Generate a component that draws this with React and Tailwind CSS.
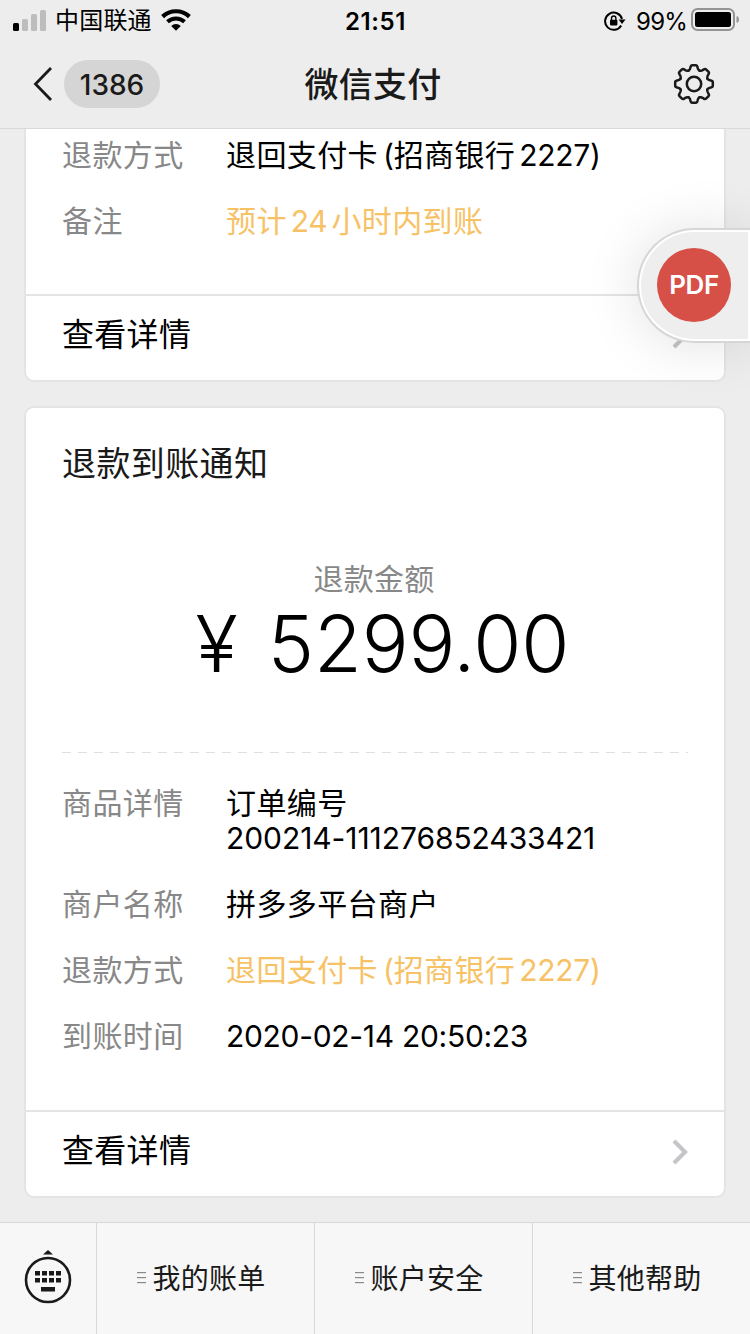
import React from 'react';
import { clsx } from 'clsx';

const refundRows = [
    { label: '退款方式', lines: [['退回支付卡', '(', '招商银行', '2227)']] },
    { label: '备注', lines: [['预计', '24', '小时内到账']], highlight: true },
];

const arrivalRows = [
    { label: '商品详情', lines: [['订单编号'], ['200214-111276852433421']] },
    { label: '商户名称', lines: [['拼多多平台商户']] },
    { label: '退款方式', lines: [['退回支付卡', '(', '招商银行', '2227)']], highlight: true },
    { label: '到账时间', lines: [['2020-02-14 20:50:23']] },
];

const menus = ['我的账单', '账户安全', '其他帮助'];

const getTracking = (text) => {
    if (text.length > 20) return '-tracking-[0.07px]';
    if (/^[\x20-\x7e]+$/.test(text)) return 'tracking-[-0.3px]';
    return 'tracking-[0.4px]';
};

const StatusBar = () => (
    <div className="flex h-10 items-center justify-between pl-[13px] pr-[11px] text-black">
        <div className="flex w-[300px] items-center">
            <svg width="33" height="21" viewBox="0 0 33 21">
                <rect x="0" y="13" width="6" height="8" rx="1.5" fill="#000" />
                <rect x="9" y="9" width="6" height="12" rx="1.5" fill="#bdbdbd" />
                <rect x="18" y="4" width="6" height="17" rx="1.5" fill="#bdbdbd" />
                <rect x="27" y="0" width="6" height="21" rx="1.5" fill="#bdbdbd" />
            </svg>
            <span className="ml-[9px] pt-[2px] text-[24px] leading-[40px] tracking-[0.2px]">中国联通</span>
            <svg className="ml-[9px]" width="30" height="22" viewBox="0 0 30 22">
                <path d="M1.6 7.6a19.5 19.5 0 0 1 26.8 0" fill="none" stroke="#000" strokeWidth="4.2" />
                <path d="M6.5 12.8a12.5 12.5 0 0 1 17 0" fill="none" stroke="#000" strokeWidth="4" />
                <path d="M10.2 17a6.8 6.8 0 0 1 9.6 0L15 21.8z" fill="#000" />
            </svg>
        </div>
        <span className="-ml-px pt-[3px] text-[24px] font-semibold leading-[40px] tracking-[0.6px]">21:51</span>
        <div className="flex w-[300px] items-center justify-end">
            <svg className="mt-px" width="22" height="20" viewBox="0 0 22 20">
                <path d="M17.2 14.4A8.6 8.6 0 1 1 18 8" fill="none" stroke="#000" strokeWidth="2" />
                <path d="M14.6 8.5h7L18 13z" fill="#000" />
                <rect x="6" y="8.8" width="7.4" height="5.6" rx="0.8" fill="#000" />
                <path d="M7.5 9V7.2a2.2 2.2 0 0 1 4.4 0V9" fill="none" stroke="#000" strokeWidth="1.4" />
            </svg>
            <span className="ml-[10px] pt-[3px] text-[24px] leading-[40px] tracking-[-0.8px]">99%</span>
            <svg className="ml-1" width="48" height="24" viewBox="0 0 48 24">
                <rect x="1" y="1" width="42" height="21" rx="5.5" fill="none" stroke="#949494" strokeWidth="2" />
                <rect x="4" y="4" width="36" height="15" rx="2.5" fill="#000" />
                <path d="M46 8.5c2 .8 2 5.2 0 6z" fill="#949494" stroke="#949494" />
            </svg>
        </div>
    </div>
);

const GearIcon = () => (
    <svg width="42" height="42" viewBox="-21 -21 42 42" fill="none" stroke="#1a1a1a" strokeWidth="2.5">
        {[0, 45, 90, 135, 180, 225, 270, 315].map((angle) => (
            <path
                key={angle}
                transform={`rotate(${angle})`}
                strokeLinecap="round"
                d="M-5.5 -13.3C-4.2 -13.9 -3.8 -14.9 -3.5 -16.8Q-3.1 -18.8 -1.8 -18.8H1.8Q3.1 -18.8 3.5 -16.8C3.8 -14.9 4.2 -13.9 5.5 -13.3"
            />
        ))}
        <circle r="7.2" />
    </svg>
);

const Header = () => (
    <header className="h-[129px] shrink-0 border-b border-[#d9d9d9] bg-[#ededed]">
        <StatusBar />
        <div className="flex h-[88px] items-center justify-between pl-8 pr-[35px]">
            <div className="flex w-[200px] items-center">
                <svg width="22" height="36" viewBox="0 0 22 36" fill="none" stroke="#1a1a1a" strokeWidth="2.8">
                    <path d="M19 2L3.5 18L19 34" />
                </svg>
                <span className="ml-[10px] h-12 w-24 rounded-full bg-[#d5d5d5] text-center text-[28px] leading-[51px] font-medium text-[#1a1a1a]">
                    1386
                </span>
            </div>
            <h1 className="-ml-1 pt-[2px] text-[34px] font-medium leading-[48px] tracking-[0.2px] text-[#1a1a1a]">微信支付</h1>
            <div className="flex w-[197px] justify-end">
                <GearIcon />
            </div>
        </div>
    </header>
);

const DetailRow = ({ label, lines, highlight }) => (
    <div className="flex text-[30px] leading-[35px]">
        <span className="w-[164px] shrink-0 tracking-[0.4px] text-[#888888]">{label}</span>
        <div className={clsx(highlight ? 'text-[#f7c266]' : 'text-black')}>
            {lines.map((parts) => (
                <div key={parts[0]} className="flex gap-1 whitespace-nowrap">
                    {parts.map((part) => (
                        <span key={part} className={clsx(getTracking(part), part === '(' && '-mr-1 ml-px')}>
                            {part}
                        </span>
                    ))}
                </div>
            ))}
        </div>
    </div>
);

const ViewDetails = () => (
    <div className="box-content flex h-[84px] items-center justify-between border-t-2 border-[#e4e4e4] pl-9 pr-[35px]">
        <span className="-mt-[7px] text-[32px] leading-[48px] tracking-[0.3px] text-black">查看详情</span>
        <svg className="-mt-1" width="18" height="26" viewBox="0 0 18 26" fill="none" stroke="#c5c5c9" strokeWidth="4.2">
            <path d="M3 2L14 13L3 24" />
        </svg>
    </div>
);

const FloatingPdf = () => (
    <div className="absolute right-0 top-[228px] flex h-[115px] w-[113px] items-center rounded-l-full border-2 border-r-0 border-[#d6d6d6] bg-white p-[2px] shadow-[0_2px_56px_rgba(0,0,0,0.12)]">
        <div className="flex h-full w-full items-center rounded-l-full bg-[#eeeeee] pl-4">
            <div className="-mt-px h-[74px] w-[74px] rounded-full bg-[#d65048] text-center text-[26px] font-semibold leading-[74px] tracking-[-0.4px] text-white">
                PDF
            </div>
        </div>
    </div>
);

const KeyboardIcon = () => (
    <svg className="-mt-[3px]" width="48" height="56" viewBox="0 0 48 56">
        <path d="M19 5.5L24 1L29 5.5z" fill="#1a1a1a" />
        <circle cx="24" cy="31" r="22" fill="none" stroke="#1a1a1a" strokeWidth="2.6" />
        {[11, 18, 25, 32].map((x) => (
            <g key={x} fill="#1a1a1a">
                <rect x={x} y="22" width="5" height="4.5" />
                <rect x={x} y="29" width="5" height="4.5" />
            </g>
        ))}
        <rect x="17" y="38" width="14" height="4.5" fill="#1a1a1a" />
    </svg>
);

const BottomMenu = () => (
    <footer className="flex h-28 shrink-0 border-t border-[#d8d8d8] bg-[#f7f7f7]">
        <div className="flex w-24 shrink-0 items-center justify-center">
            <KeyboardIcon />
        </div>
        {menus.map((menu) => (
            <div key={menu} className="flex flex-1 items-center justify-center border-l border-[#d8d8d8] pr-2">
                <svg className="mr-[6px] -mt-px" width="9" height="12" viewBox="0 0 9 12" fill="#8a8a8a">
                    <rect y="0" width="9" height="1.2" />
                    <rect y="5" width="9" height="1.2" />
                    <rect y="10" width="9" height="1.2" />
                </svg>
                <span className="pt-px text-[28px] leading-[40px] tracking-[0.3px] text-[#1a1a1a]">{menu}</span>
            </div>
        ))}
    </footer>
);

const App = () => {
    return (
        <div className="relative flex h-[1334px] w-[750px] flex-col overflow-hidden bg-[#ededed] font-['Inter','Noto_Sans_CJK_SC',sans-serif]">
            <Header />
            <main className="flex flex-1 flex-col gap-6 px-6">
                <section className="rounded-b-[10px] border-2 border-t-0 border-[#e4e4e4] bg-white">
                    <div className="flex h-[165px] flex-col gap-[31px] pl-9 pt-[9px]">
                        {refundRows.map((row) => (
                            <DetailRow key={row.label} {...row} />
                        ))}
                    </div>
                    <ViewDetails />
                </section>

                <section className="rounded-[10px] border-2 border-[#e4e4e4] bg-white">
                    <div className="h-[702px] px-9 pt-8">
                        <h2 className="text-[34px] leading-[48px] tracking-[0.4px] text-[#1a1a1a]">退款到账通知</h2>
                        <p className="-ml-[2px] mt-[71px] text-center text-[30px] leading-[40px] tracking-[0.3px] text-[#888888]">退款金额</p>
                        <p className="mt-[5px] flex justify-center gap-[30px] pl-[15px] text-[78px] font-light leading-[80px] text-black">
                            <span>¥</span>
                            <span className="tracking-[-0.1px]">5299.00</span>
                        </p>
                        <div className="mt-[68px] h-px bg-[repeating-linear-gradient(90deg,#e0e0e0_0_9px,transparent_9px_16px)]" />
                        <div className="mt-[33px] flex flex-col gap-[31px]">
                            {arrivalRows.map((row) => (
                                <DetailRow key={row.label} {...row} />
                            ))}
                        </div>
                    </div>
                    <ViewDetails />
                </section>
            </main>
            <BottomMenu />
            <FloatingPdf />
        </div>
    );
};

export default App;
